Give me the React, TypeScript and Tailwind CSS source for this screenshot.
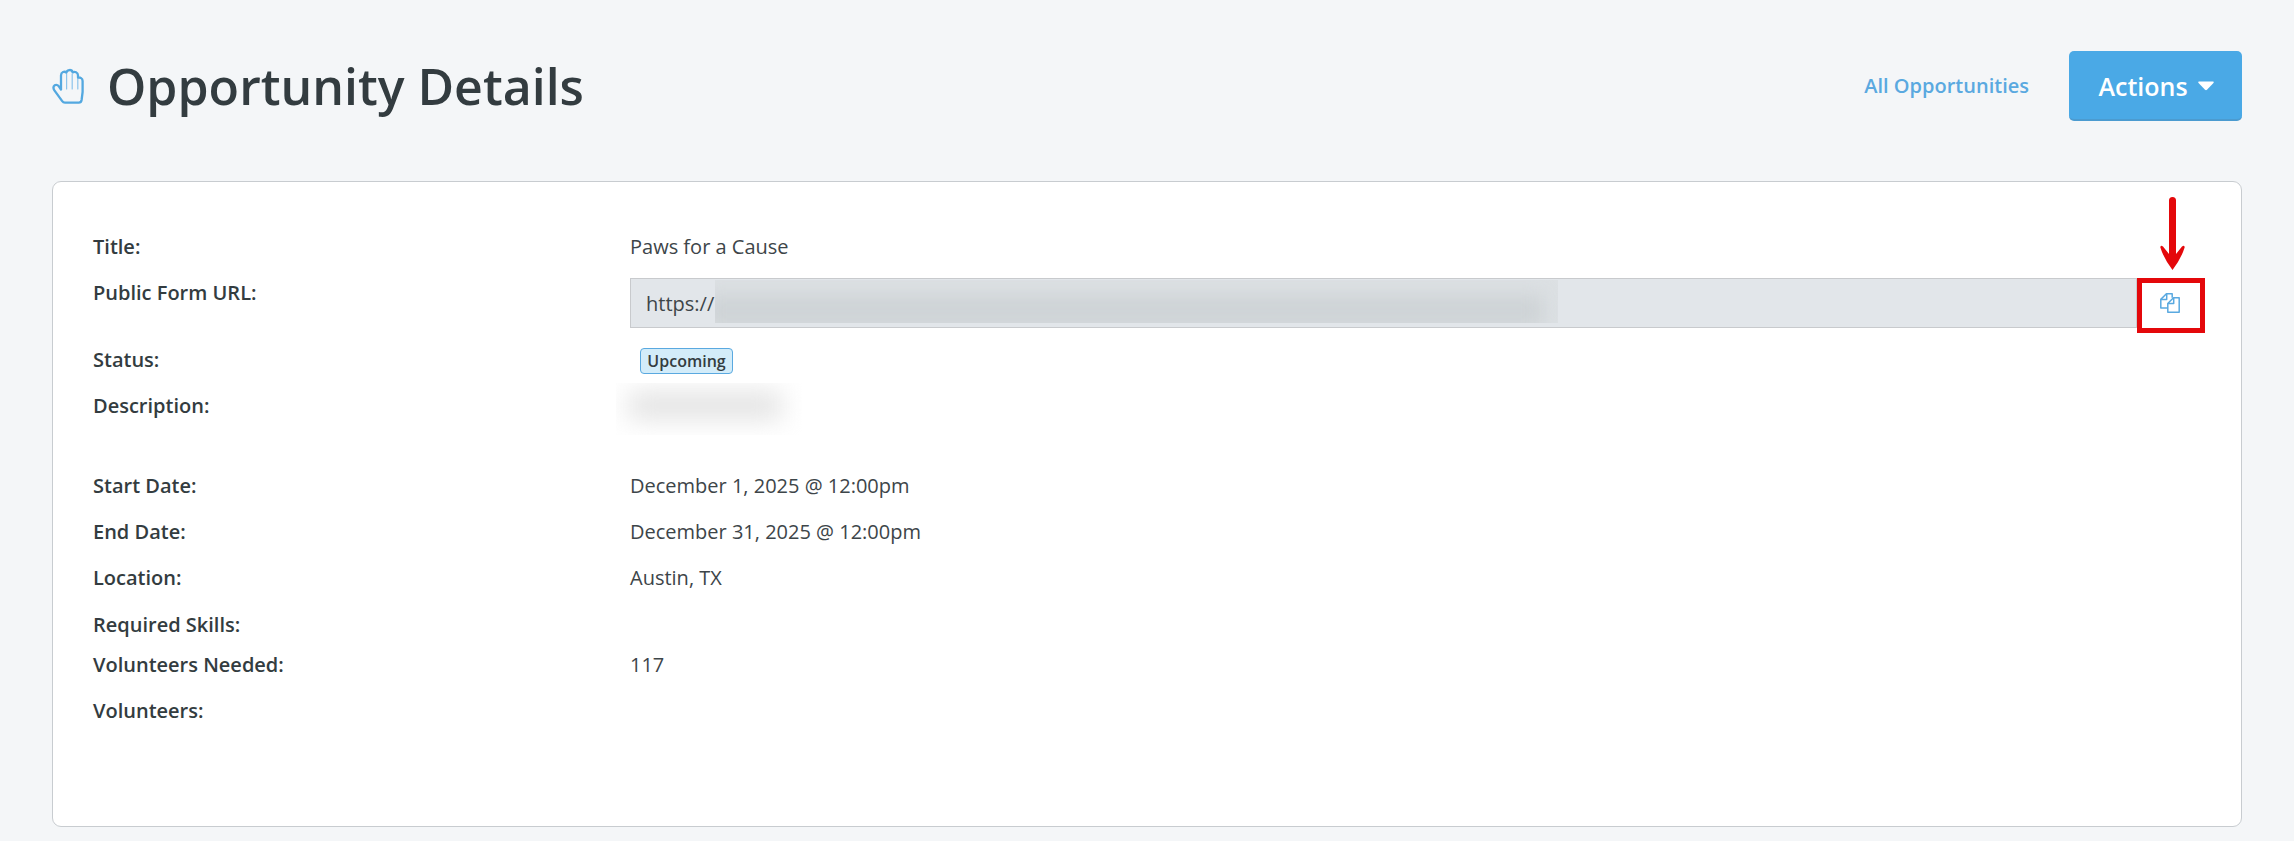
import type { ReactNode } from "react";

function HandIcon() {
  return (
    <svg width="34" height="40" viewBox="0 0 34 40" fill="none" strokeLinejoin="round" strokeLinecap="round">
      <path d="M14.6 6V21M20.2 6V21M25.8 10V21" stroke="#8cc4ec" strokeWidth="1.2" />
      <path
        d="M9 21.5V7.4C9 4 12.6 2.8 14.4 4.6C15 1.2 20 1.2 20.6 4.4C22.6 3.2 26 4.2 26 7.4V9.6C28.2 9.2 30.6 10.2 30.6 13V24L29.6 32Q29.2 34.6 26.8 34.6H13Q11.2 34.6 10.2 33.2L2.4 22.4C-0.4 17.6 4.6 14.8 7.2 18.8L9 21.5"
        stroke="#53a8e0"
        strokeWidth="2.3"
      />
    </svg>
  );
}

function CopyIcon() {
  return (
    <svg width="20" height="20" viewBox="0 0 20 20" fill="none" stroke="#5aa9e0" strokeWidth="1.5" strokeLinejoin="round">
      <path d="M7.8 15H0.8V6.4L6.4 0.8H12.2V4.8" />
      <path d="M6.7 0.8V6.4H0.8" />
      <path d="M13.7 4.8H19.2V19.2H7.8V10.5L13.5 4.8Z" />
      <path d="M13.7 4.8V10.6H7.8" />
    </svg>
  );
}

function Row({ label, height, children }: { label: string; height: string; children?: ReactNode }) {
  return (
    <div className={`flex ${height}`}>
      <dt className="w-[537px] shrink-0 font-semibold text-[#333c40]">{label}</dt>
      <dd className="min-w-0 flex-1 text-[#3d4549]">{children}</dd>
    </div>
  );
}

export default function App() {
  return (
    <main className="h-[841px] w-[2294px] overflow-hidden bg-[#f4f6f8] px-[52px] font-['Open_Sans',sans-serif] text-[20px] leading-[30px]">
      <header className="flex h-[181px] items-start justify-between">
        <div className="flex pt-[51px]">
          <div className="pt-[17px]">
            <HandIcon />
          </div>
          <h1 className="ml-[21px] text-[50px] leading-[70px] font-semibold whitespace-nowrap text-[#333c40]">
            Opportunity Details
          </h1>
        </div>
        <div className="flex pt-[51px]">
          <a className="mr-[40px] pt-[20px] font-semibold text-[#5aa9e0]">All Opportunities</a>
          <button className="flex h-[70px] w-[173px] items-center justify-center gap-[10px] rounded-[5px] border-b-2 border-[#4b9bd0] bg-[#4aa9e6] pt-[2px] pl-px text-[25px] font-semibold text-white">
            Actions
            <svg width="16" height="10" viewBox="0 0 15 10" preserveAspectRatio="none" fill="#fff">
              <path d="M1 0.5H14Q15.4 0.7 14.5 1.9L8.4 8.8Q7.5 9.6 6.6 8.8L0.5 1.9Q-0.4 0.7 1 0.5Z" />
            </svg>
          </button>
        </div>
      </header>

      <section className="h-[646px] w-[2190px] rounded-[9px] border border-[#c8ccd0] bg-white pt-[50px] pr-[40px] pl-[40px]">
        <dl>
          <Row label="Title:" height="h-[46px]">Paws for a Cause</Row>
          <Row label="Public Form URL:" height="h-[67px]">
            <div className="flex h-[50px] w-[1570px]">
              <div className="flex flex-1 items-start border border-[#c8cacd] bg-[#e2e6ea] pl-[15px]">
                <span className="pt-[10px]">https://</span>
                <div className="mt-px ml-px h-[43px] w-[843px] overflow-hidden bg-[#dce0e3]">
                  <div className="mt-[15px] -ml-[10px] h-[32px] w-[838px] bg-[#ced3d6] blur-[9px]" />
                </div>
              </div>
              <div className="relative w-[63px]">
                <button className="absolute top-0 left-0 flex h-[55px] w-[68px] items-center justify-center border-5 border-[#e4080b] bg-white pr-[2px] pb-[5px]">
                  <CopyIcon />
                </button>
                <svg className="absolute -top-[82px] left-[22px]" width="28" height="76" viewBox="0 0 28 76">
                  <path
                    d="M13.5 1Q17 1 17 4.5V58L23 50.5Q25.5 48.5 25.7 51.3Q22 63 13.5 74Q5 63 1.3 51.3Q1.5 48.5 4 50.5L10 58V4.5Q10 1 13.5 1Z"
                    fill="#e4080b"
                  />
                </svg>
              </div>
            </div>
          </Row>
          <Row label="Status:" height="h-[46px]">
            <span className="mt-[3px] ml-[10px] flex h-[26px] w-[93px] items-center justify-center rounded-[4px] border border-[#5aa9e0] bg-[#d3ecf9] text-[16px] font-semibold text-[#333c40]">
              Upcoming
            </span>
          </Row>
          <Row label="Description:" height="h-[80px]">
            <div className="-mt-[8px] -ml-[14px] h-[52px] w-[186px] overflow-hidden">
              <div className="mt-[9px] ml-[12px] h-[27px] w-[154px] bg-[#e2e2e2] blur-[13px]" />
            </div>
          </Row>
          <Row label="Start Date:" height="h-[46px]">December 1, 2025 @ 12:00pm</Row>
          <Row label="End Date:" height="h-[46px]">December 31, 2025 @ 12:00pm</Row>
          <Row label="Location:" height="h-[47px]">Austin, TX</Row>
          <Row label="Required Skills:" height="h-[40px]" />
          <Row label="Volunteers Needed:" height="h-[46px]">117</Row>
          <Row label="Volunteers:" height="h-[46px]" />
        </dl>
      </section>
    </main>
  );
}
